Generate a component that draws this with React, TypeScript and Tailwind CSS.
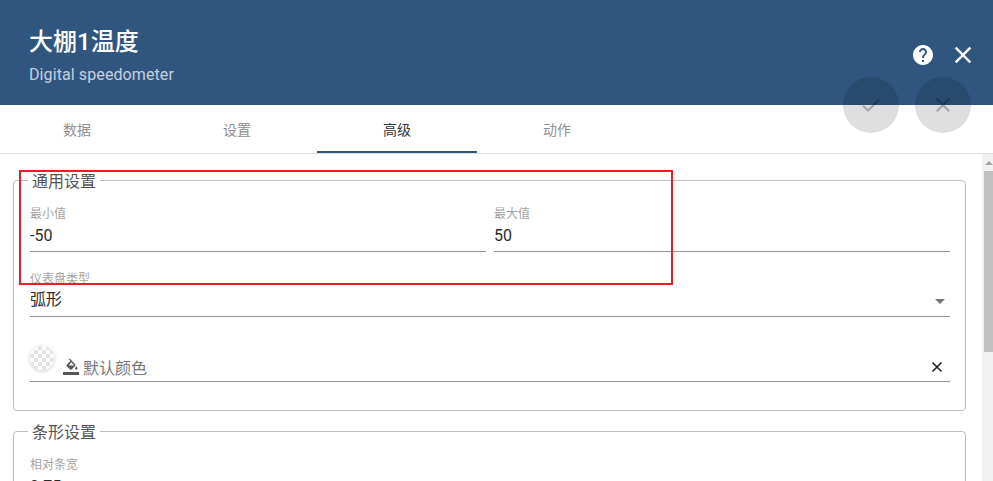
import React from "react";

function Field({ label, value, className = "" }: { label: string; value: string; className?: string }) {
  return (
    <div className={`flex flex-col border-b border-[#949494] h-[45px] ${className}`}>
      <span className="text-[12px] leading-[14px] text-[#a3a3a3]">{label}</span>
      <span className="text-[16px] leading-[20px] mt-[5px] text-[#2b2b2b]">{value}</span>
    </div>
  );
}

function Tab({ label, active }: { label: string; active?: boolean }) {
  return (
    <div className={`relative w-40 flex items-center justify-center text-[14px] pt-[2px] ${active ? "text-[#333333]" : "text-[#8f8f8f]"}`}>
      {label}
      {active && <div className="absolute left-0 right-0 bottom-0 h-[2px] bg-[#305680]" />}
    </div>
  );
}

function Checker() {
  return (
    <svg width="24" height="24" viewBox="0 0 24 24" className="rounded-full">
      <defs>
        <pattern id="chk" width="8" height="8" patternUnits="userSpaceOnUse">
          <rect width="8" height="8" fill="#ffffff" />
          <rect width="4" height="4" fill="#e2e2e2" />
          <rect x="4" y="4" width="4" height="4" fill="#e2e2e2" />
        </pattern>
      </defs>
      <circle cx="12" cy="12" r="12" fill="url(#chk)" />
    </svg>
  );
}

export default function App() {
  return (
    <div className="relative w-[993px] h-[481px] overflow-hidden bg-white font-['Roboto','Noto_Sans_CJK_SC',sans-serif]">
      <header className="h-[105px] bg-[#305680] pl-[29px] pt-[26px] flex flex-col">
        <h1 className="text-[24px] leading-[32px] font-medium text-white">大棚1温度</h1>
        <p className="text-[16px] leading-[20px] tracking-[0.1px] mt-[7px] text-[#c6d0dd]">Digital speedometer</p>
      </header>

      <nav className="h-[49px] flex border-b border-[#e0e0e0] -ml-[3px]">
        <Tab label="数据" />
        <Tab label="设置" />
        <Tab label="高级" active />
        <Tab label="动作" />
      </nav>

      <div className="flex h-[327px]">
        <main className="flex-1 pl-[13px] pr-[16px] overflow-hidden">
          <fieldset className="mt-[14px] h-[243px] border border-[#bdbdbd] rounded-[4px] pl-[16px] pr-[15px] pt-[15px]">
            <legend className="-ml-[2px] px-[4px] pt-[4px] text-[16px] leading-[20px] text-[#555555]">通用设置</legend>
            <div className="flex gap-2">
              <Field className="flex-1" label="最小值" value="-50" />
              <Field className="flex-1" label="最大值" value="50" />
            </div>
            <div className="mt-[20px] h-[45px] border-b border-[#949494] flex flex-col relative">
              <span className="text-[12px] leading-[14px] text-[#a3a3a3]">仪表盘类型</span>
              <span className="text-[16px] leading-[20px] mt-[4px] text-[#2b2b2b]">弧形</span>
              <span className="absolute right-[5px] top-[27px] w-0 h-0 border-l-[5px] border-r-[5px] border-t-[5px] border-l-transparent border-r-transparent border-t-[#757575]" />
            </div>
            <div className="mt-[19px] h-[46px] border-b border-[#949494] flex items-end relative">
              <div className="absolute left-0 top-[10px] w-6 h-6 rounded-full shadow-[0_1px_4px_rgba(0,0,0,0.2)]">
                <Checker />
              </div>
              <svg width="16" height="17" viewBox="0 0 16 17" className="ml-[33px] mb-[6px] fill-[#555555]">
                <path d="M4.2 0.6 3.4 1.4 5 3 1.2 6.8c-.4.4-.4 1 0 1.4l3.4 3.4c.4.4 1 .4 1.4 0l3.8-3.8c.4-.4.4-1 0-1.4L4.2.6zM3.2 7.5 5.8 4.3 8.7 7.5H3.2z" transform="translate(2.5 0)" />
                <path d="M13.3 8.2s-1.2 1.4-1.2 2.2c0 .7.5 1.2 1.2 1.2s1.2-.5 1.2-1.2c0-.8-1.2-2.2-1.2-2.2z" />
                <path d="M0 14h16v3H0z" />
              </svg>
              <span className="ml-[4px] mb-[2px] text-[16px] leading-[20px] text-[#777777]">默认颜色</span>
              <svg width="14" height="14" viewBox="0 0 14 14" className="absolute right-[6px] bottom-[7px] stroke-[#222222]" strokeWidth="1.6">
                <path d="M2.5 2.5l9 9M11.5 2.5l-9 9" />
              </svg>
            </div>
          </fieldset>

          <fieldset className="mt-[8px] h-[100px] border border-[#bdbdbd] rounded-[4px] pl-[16px] pr-[15px] pt-[15px]">
            <legend className="-ml-[2px] px-[4px] pt-[4px] text-[16px] leading-[20px] text-[#555555]">条形设置</legend>
            <span className="block text-[12px] leading-[14px] text-[#a3a3a3]">相对条宽</span>
            <span className="block text-[16px] leading-[20px] mt-[5px] text-[#2b2b2b]">0.75</span>
          </fieldset>
        </main>

        <aside className="w-[11px] bg-[#f1f1f1] flex flex-col items-end">
          <div className="w-[9px] h-[17px] flex justify-center pt-[7px]">
            <span className="w-0 h-0 border-l-[4px] border-r-[4px] border-b-[4px] border-l-transparent border-r-transparent border-b-[#a3a3a3]" />
          </div>
          <div className="w-[9px] h-[181px] bg-[#c1c1c1]" />
        </aside>
      </div>

      <svg width="24" height="24" viewBox="0 0 24 24" className="absolute left-[911px] top-[43px] fill-white">
        <path d="M12 2C6.48 2 2 6.48 2 12s4.48 10 10 10 10-4.48 10-10S17.52 2 12 2zm1 17h-2v-2h2v2zm2.07-7.75-.9.92C13.45 12.9 13 13.5 13 15h-2v-.5c0-1.1.45-2.1 1.17-2.83l1.24-1.26c.37-.36.59-.86.59-1.41 0-1.1-.9-2-2-2s-2 .9-2 2H8c0-2.21 1.79-4 4-4s4 1.79 4 4c0 .88-.36 1.68-.93 2.25z" />
      </svg>
      <svg width="28" height="28" viewBox="0 0 24 24" className="absolute left-[949px] top-[41px] fill-white">
        <path d="M19 6.41 17.59 5 12 10.59 6.41 5 5 6.41 10.59 12 5 17.59 6.41 19 12 13.41 17.59 19 19 17.59 13.41 12z" />
      </svg>

      <div className="absolute left-[843px] top-[77px] w-14 h-14 rounded-full bg-[rgba(0,0,0,0.13)] flex items-center justify-center">
        <svg width="24" height="24" viewBox="0 0 24 24" className="fill-[rgba(0,0,0,0.26)]">
          <path d="M9 16.17 4.83 12l-1.42 1.41L9 19 21 7l-1.41-1.41z" />
        </svg>
      </div>
      <div className="absolute left-[915px] top-[77px] w-14 h-14 rounded-full bg-[rgba(0,0,0,0.13)] flex items-center justify-center">
        <svg width="24" height="24" viewBox="0 0 24 24" className="fill-[rgba(0,0,0,0.26)]">
          <path d="M19 6.41 17.59 5 12 10.59 6.41 5 5 6.41 10.59 12 5 17.59 6.41 19 12 13.41 17.59 19 19 17.59 13.41 12z" />
        </svg>
      </div>

      <div className="absolute left-[19px] top-[170px] w-[654px] h-[115px] border-2 border-[#ed1c24]" />
    </div>
  );
}
